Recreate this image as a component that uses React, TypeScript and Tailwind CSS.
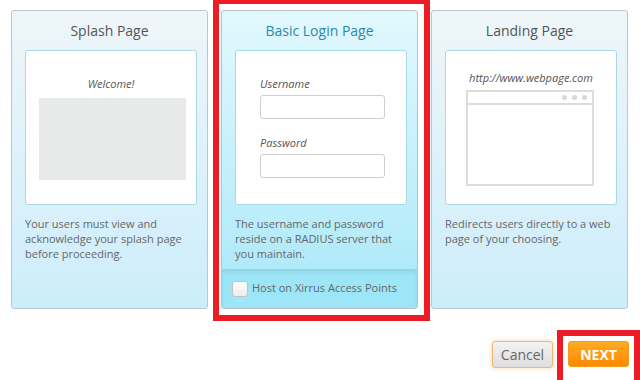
import type { ReactNode } from "react";

const font = { fontFamily: '"Open Sans", "Liberation Sans", sans-serif' };

function Card({
  title,
  active,
  children,
  text,
  footer,
}: {
  title: string;
  active?: boolean;
  children: ReactNode;
  text: string;
  footer?: ReactNode;
}) {
  return (
    <div
      className={
        "w-[197px] h-[299px] rounded-[3px] border flex flex-col overflow-hidden " +
        (active
          ? "border-[#b4c4ca] bg-gradient-to-b from-[#e2f8fe] to-[#a9e8f8]"
          : "border-[#bcc6cb] bg-gradient-to-b from-[#eff6f9] to-[#ccedfb]")
      }
    >
      <h2
        className={
          "text-[14px] leading-5 text-center pt-[10px] h-[39px] " +
          (active ? "text-[#2b8aa6]" : "text-[#555]")
        }
      >
        {title}
      </h2>
      <div className="ml-[13px] mr-[10px] h-[155px] bg-white border border-[#a7d9e7] rounded-[3px]">
        {children}
      </div>
      <p className="ml-[13px] mr-[8px] mt-[11px] text-[11px] leading-[15px] text-[#666]">
        {text}
      </p>
      {footer}
    </div>
  );
}

export default function App() {
  return (
    <div className="w-[640px] h-[380px] bg-white relative overflow-hidden" style={font}>
      <div className="flex gap-[13px] pl-[11px] pt-[10px]">
        <Card
          title="Splash Page"
          text="Your users must view and acknowledge your splash page before proceeding."
        >
          <p className="text-center italic text-[11px] text-[#555] mt-[25px] leading-4">Welcome!</p>
          <div className="mt-[6px] ml-[13px] w-[147px] h-[82px] bg-[#e8e9e9]" />
        </Card>

        <div className="relative">
          <Card
            title="Basic Login Page"
            active
            text="The username and password reside on a RADIUS server that you maintain."
            footer={
              <div className="mt-auto h-[39px] bg-[#9de6f8] shadow-[inset_0_3px_4px_rgba(0,0,0,0.08)] flex items-center gap-[4px] pl-[10px]">
                <span className="w-[16px] h-[16px] rounded-[3px] border border-[#c2c2c2] bg-gradient-to-b from-white to-[#ececec]" />
                <span className="text-[11px] text-[#666]">Host on Xirrus Access Points</span>
              </div>
            }
          >
            <div className="pl-[24px] pt-[25px]">
              <p className="italic text-[11px] text-[#555] leading-4">Username</p>
              <div className="mt-[3px] w-[125px] h-[24px] border border-[#cfcfcf] rounded-[3px]" />
              <p className="italic text-[11px] text-[#555] leading-4 mt-[16px]">Password</p>
              <div className="mt-[3px] w-[125px] h-[24px] border border-[#cfcfcf] rounded-[3px]" />
            </div>
          </Card>
          <div className="absolute -left-[8px] -top-[12px] -right-[12px] -bottom-[12px] border-[6px] border-[#ed1c24] pointer-events-none" />
        </div>

        <Card
          title="Landing Page"
          text="Redirects users directly to a web page of your choosing."
        >
          <p className="text-center italic text-[11px] text-[#555] mt-[19px] leading-4">http://www.webpage.com</p>
          <div className="mt-[4px] ml-[20px] w-[128px] h-[96px] border-2 border-[#dcdcdc] flex flex-col">
            <div className="h-[13px] border-b-2 border-[#dcdcdc] flex items-center justify-end gap-[5px] pr-[5px]">
              <span className="w-[5px] h-[5px] rounded-full bg-[#d8d8d8]" />
              <span className="w-[5px] h-[5px] rounded-full bg-[#d8d8d8]" />
              <span className="w-[5px] h-[5px] rounded-full bg-[#d8d8d8]" />
            </div>
          </div>
        </Card>
      </div>

      <div className="flex justify-end gap-[15px] pr-[11px] mt-[32px]">
        <button className="w-[61px] h-[27px] rounded-[3px] border border-[#f2b46e] bg-gradient-to-b from-[#f3f3f3] to-[#dedede] text-[14px] text-[#666] shadow-[0_0_5px_rgba(247,160,60,0.45)]">
          Cancel
        </button>
        <div className="relative">
          <button className="w-[61px] h-[26px] rounded-[3px] bg-gradient-to-b from-[#ffaa22] to-[#ff8800] border border-[#f39a1a] text-white font-bold text-[14px]">
            NEXT
          </button>
          <div className="absolute -left-[11px] -top-[11px] -right-[11px] -bottom-[19px] border-[6px] border-[#ed1c24] pointer-events-none" />
        </div>
      </div>
    </div>
  );
}
